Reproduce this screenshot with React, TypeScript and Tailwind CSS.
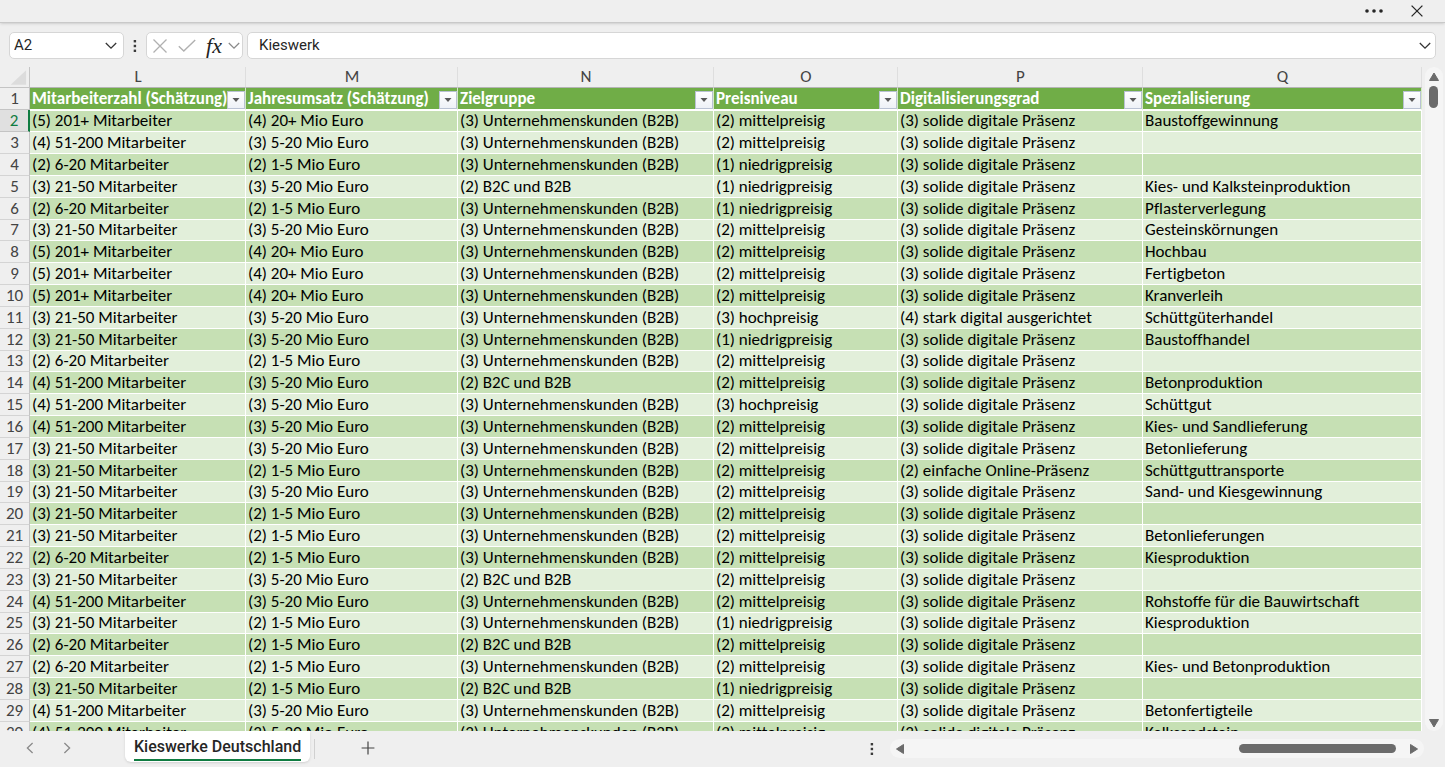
import type { ReactNode } from 'react'

interface Column {
  letter: string
  title: string
  width: string
}

const COLUMNS: Column[] = [
  { letter: 'L', title: 'Mitarbeiterzahl (Schätzung)', width: 'w-[216px]' },
  { letter: 'M', title: 'Jahresumsatz (Schätzung)', width: 'w-[212px]' },
  { letter: 'N', title: 'Zielgruppe', width: 'w-[256px]' },
  { letter: 'O', title: 'Preisniveau', width: 'w-[184px]' },
  { letter: 'P', title: 'Digitalisierungsgrad', width: 'w-[245px]' },
  { letter: 'Q', title: 'Spezialisierung', width: '' },
]

// lookup labels, indexed by their number
const STAFF = ['', '', '6-20 Mitarbeiter', '21-50 Mitarbeiter', '51-200 Mitarbeiter', '201+ Mitarbeiter']
const REVENUE = ['', '', '1-5 Mio Euro', '5-20 Mio Euro', '20+ Mio Euro']
const TARGET = ['', '', 'B2C und B2B', 'Unternehmenskunden (B2B)']
const PRICE = ['', 'niedrigpreisig', 'mittelpreisig', 'hochpreisig']
const DIGITAL = ['', '', 'einfache Online-Präsenz', 'solide digitale Präsenz', 'stark digital ausgerichtet']

type Entry = [number, number, number, number, number, string]

const ENTRIES: Entry[] = [
  [5, 4, 3, 2, 3, 'Baustoffgewinnung'],
  [4, 3, 3, 2, 3, ''],
  [2, 2, 3, 1, 3, ''],
  [3, 3, 2, 1, 3, 'Kies- und Kalksteinproduktion'],
  [2, 2, 3, 1, 3, 'Pflasterverlegung'],
  [3, 3, 3, 2, 3, 'Gesteinskörnungen'],
  [5, 4, 3, 2, 3, 'Hochbau'],
  [5, 4, 3, 2, 3, 'Fertigbeton'],
  [5, 4, 3, 2, 3, 'Kranverleih'],
  [3, 3, 3, 3, 4, 'Schüttgüterhandel'],
  [3, 3, 3, 1, 3, 'Baustoffhandel'],
  [2, 2, 3, 2, 3, ''],
  [4, 3, 2, 2, 3, 'Betonproduktion'],
  [4, 3, 3, 3, 3, 'Schüttgut'],
  [4, 3, 3, 2, 3, 'Kies- und Sandlieferung'],
  [3, 3, 3, 2, 3, 'Betonlieferung'],
  [3, 2, 3, 2, 2, 'Schüttguttransporte'],
  [3, 3, 3, 2, 3, 'Sand- und Kiesgewinnung'],
  [3, 2, 3, 2, 3, ''],
  [3, 2, 3, 2, 3, 'Betonlieferungen'],
  [2, 2, 3, 2, 3, 'Kiesproduktion'],
  [3, 3, 2, 2, 3, ''],
  [4, 3, 3, 2, 3, 'Rohstoffe für die Bauwirtschaft'],
  [3, 2, 3, 1, 3, 'Kiesproduktion'],
  [2, 2, 2, 2, 3, ''],
  [2, 2, 3, 2, 3, 'Kies- und Betonproduktion'],
  [3, 2, 2, 1, 3, ''],
  [4, 3, 3, 2, 3, 'Betonfertigteile'],
  [4, 3, 3, 2, 3, 'Kalksandstein'],
]

const label = (list: string[], n: number) => `(${n}) ${list[n]}`

function Chevron({ d, className }: { d: string; className: string }) {
  return (
    <svg viewBox="0 0 12 12" className={`h-3 w-3 shrink-0 ${className}`} fill="none" stroke="currentColor" strokeWidth="1.3">
      <path d={d} />
    </svg>
  )
}

const DOWN = 'M0.8 3 L6 8.2 L11.2 3'

function VerticalDots() {
  return (
    <svg viewBox="0 0 4 14" className="h-3.5 w-1 shrink-0" fill="#3b3b3b">
      <rect x="0.7" y="1" width="2.4" height="2.4" />
      <rect x="0.7" y="5.8" width="2.4" height="2.4" />
      <rect x="0.7" y="10.6" width="2.4" height="2.4" />
    </svg>
  )
}

function ScrollArrow({ points, name }: { points: string; name: string }) {
  return (
    <button aria-label={name} className="shrink-0">
      <svg viewBox="0 0 12 12" className="h-3 w-3" fill="#6b6b6b" stroke="#6b6b6b" strokeWidth="1" strokeLinejoin="round">
        <polygon points={points} />
      </svg>
    </button>
  )
}

function TitleBar() {
  return (
    <div className="z-10 flex h-[23px] shrink-0 items-center justify-end gap-7 border-b border-[#c9c9c9] pr-[22px] text-[#262626] shadow-sm">
      <button aria-label="Weitere Optionen">
        <svg viewBox="0 0 18 4" className="h-1 w-[18px]" fill="currentColor">
          <circle cx="2" cy="2" r="1.8" />
          <circle cx="9" cy="2" r="1.8" />
          <circle cx="16" cy="2" r="1.8" />
        </svg>
      </button>
      <button aria-label="Schließen">
        <svg viewBox="0 0 12 12" className="h-3 w-3" stroke="currentColor" strokeWidth="1.3">
          <path d="M0.6 0.6 L11.4 11.4 M11.4 0.6 L0.6 11.4" />
        </svg>
      </button>
    </div>
  )
}

function Box({ className, children }: { className: string; children: ReactNode }) {
  return (
    <div className={`flex h-[27px] items-center rounded-[5px] border border-[#d6d6d6] bg-white ${className}`}>
      {children}
    </div>
  )
}

function FormulaBar() {
  return (
    <div className="flex shrink-0 items-center px-[9px] pt-[9px] pb-2 font-['Segoe_UI','Roboto',sans-serif] text-[15px] text-[#262626]">
      <Box className="w-[115px] pr-[6px] pl-1">
        <input aria-label="Namenfeld" defaultValue="A2" className="min-w-0 flex-1 outline-none" />
        <button aria-label="Namenliste öffnen">
          <Chevron d={DOWN} className="text-[#333]" />
        </button>
      </Box>
      <div className="flex w-[22px] justify-center">
        <VerticalDots />
      </div>
      <Box className="w-[97px] pl-[5px]">
        <button aria-label="Abbrechen" className="text-[#b0b0b0]">
          <svg viewBox="0 0 16 16" className="h-4 w-4" stroke="currentColor" strokeWidth="1.3">
            <path d="M1.5 1.5 L14.5 14.5 M14.5 1.5 L1.5 14.5" />
          </svg>
        </button>
        <button aria-label="Eingeben" className="ml-[10px] text-[#b0b0b0]">
          <svg viewBox="0 0 18 14" className="h-3.5 w-[18px]" fill="none" stroke="currentColor" strokeWidth="1.4">
            <path d="M0.8 7.2 L5.8 12 L17.2 1" />
          </svg>
        </button>
        <button
          aria-label="Funktion einfügen"
          className="ml-2 flex h-6 w-5 items-center justify-center font-['Cambria_Math','Liberation_Serif',serif] text-[22px] leading-5 text-[#222] italic"
        >
          fx
        </button>
        <button aria-label="Funktionsliste öffnen" className="ml-1">
          <Chevron d={DOWN} className="text-[#8a8a8a]" />
        </button>
      </Box>
      <Box className="ml-1 flex-1 pr-1 pl-[11px]">
        <input aria-label="Bearbeitungsleiste" defaultValue="Kieswerk" className="min-w-0 flex-1 outline-none" />
        <button aria-label="Bearbeitungsleiste erweitern">
          <Chevron d={DOWN} className="text-[#333]" />
        </button>
      </Box>
    </div>
  )
}

function FilterButton({ title }: { title: string }) {
  return (
    <button
      aria-label={`${title} filtern`}
      className="flex h-[18px] w-[18px] shrink-0 items-center justify-center border border-[#b9c2d3] bg-linear-to-b from-white to-[#eef1f7]"
    >
      <svg viewBox="0 0 8 4" className="h-1 w-2" fill="#595959">
        <polygon points="0.5,0 7.5,0 4,4" />
      </svg>
    </button>
  )
}

function Sheet() {
  return (
    <div className="min-w-0 flex-1 overflow-hidden font-['Calibri','Carlito','Lato',sans-serif] text-[17px] leading-5 [font-variant-ligatures:none]">
      <table className="w-full table-fixed border-separate border-spacing-0 whitespace-nowrap text-black">
        <colgroup>
          <col className="w-[30px]" />
          {COLUMNS.map((c) => (
            <col key={c.letter} className={c.width} />
          ))}
        </colgroup>
        <thead>
          <tr className="h-[21px] text-[#444]">
            <th className="border-r border-b border-[#c4c4c4] p-0">
              <svg viewBox="0 0 30 20" className="block h-5 w-full">
                <polygon points="27,3 27,18 11,18" fill="#dcdcdc" />
              </svg>
            </th>
            {COLUMNS.map((c) => (
              <th key={c.letter} scope="col" className="border-r border-b border-r-[#dedede] border-b-[#b5b5b5] p-0 pl-px leading-5 font-normal">
                {c.letter}
              </th>
            ))}
          </tr>
          <tr className="h-[22px]">
            <th scope="row" className="border-r border-b border-[#c4c4c4] p-0 font-normal text-[#444]">
              1
            </th>
            {COLUMNS.map((c) => (
              <th key={c.letter} className="border-r border-b border-r-[#d5e8c8] border-b-white bg-[#70ad47] p-0 text-left font-bold text-white">
                <div className="flex h-[21px] items-end justify-between pl-[2px]">
                  {c.title}
                  <FilterButton title={c.title} />
                </div>
              </th>
            ))}
          </tr>
        </thead>
        <tbody>
          {ENTRIES.map(([staff, revenue, target, price, digital, special], i) => {
            const cells = [
              label(STAFF, staff),
              label(REVENUE, revenue),
              label(TARGET, target),
              label(PRICE, price),
              label(DIGITAL, digital),
              special,
            ]
            const active = i === 0
            return (
              <tr key={i} className={i % 6 === 5 ? 'h-[21px]' : 'h-[22px]'}>
                <th
                  scope="row"
                  className={
                    active
                      ? 'border-r-2 border-b border-r-[#107c41] border-b-[#c4c4c4] bg-[#e0e0e0] p-0 font-normal text-[#107c41]'
                      : 'border-r border-b border-r-[#c4c4c4] border-b-[#d4d4d4] p-0 font-normal text-[#444]'
                  }
                >
                  {i + 2}
                </th>
                {cells.map((text, c) => (
                  <td
                    key={c}
                    className={`overflow-hidden border-r border-b border-white p-0 pl-[2px] ${active ? 'border-t' : ''} ${i % 2 ? 'bg-[#e2efda]' : 'bg-[#c6e0b4]'}`}
                  >
                    {text}
                  </td>
                ))}
              </tr>
            )
          })}
        </tbody>
      </table>
    </div>
  )
}

function VerticalScrollbar() {
  return (
    <div className="flex w-[23px] shrink-0 justify-center">
      <div className="flex w-[18px] flex-col items-center rounded-full bg-[#f5f5f5] pt-1 pb-[2px]">
        <ScrollArrow name="Nach oben" points="6,2 10.5,9.5 1.5,9.5" />
        <div className="mt-[3px] h-[22px] w-[9px] rounded-full bg-[#6b6b6b]" />
        <div className="flex-1" />
        <ScrollArrow name="Nach unten" points="6,10 10.5,2.5 1.5,2.5" />
      </div>
    </div>
  )
}

function SheetTabs() {
  return (
    <div className="flex h-9 shrink-0 items-start font-['Segoe_UI','Roboto',sans-serif]">
      <div className="flex h-[34px] w-[125px] items-center gap-[25px] pl-6 text-[#8a8a8a]">
        <button aria-label="Vorheriges Blatt">
          <Chevron d="M8.6 1 L3.4 6 L8.6 11" className="" />
        </button>
        <button aria-label="Nächstes Blatt">
          <Chevron d="M3.4 1 L8.6 6 L3.4 11" className="" />
        </button>
      </div>
      <button className="h-[31px] rounded-b-md bg-white px-[9px] text-[16px] font-medium text-[#262626] shadow-sm">
        <span className="block h-7 border-b-2 border-[#107c41] leading-7">Kieswerke Deutschland</span>
      </button>
      <div className="mt-2 ml-1 h-5 w-px bg-[#d0d0d0]" />
      <button aria-label="Neues Blatt" className="mt-[10px] ml-[46px] text-[#444]">
        <svg viewBox="0 0 14 14" className="h-3.5 w-3.5" stroke="currentColor" strokeWidth="1.2">
          <path d="M7 0.6 V13.4 M0.6 7 H13.4" />
        </svg>
      </button>
      <div className="flex-1" />
      <div className="mt-[11px] mr-4">
        <VerticalDots />
      </div>
      <div className="mt-2 mr-[21px] flex h-[19px] w-[534px] items-center rounded-full bg-[#f5f5f5] px-1">
        <ScrollArrow name="Nach links" points="2.5,6 9.5,1.5 9.5,10.5" />
        <div className="flex-1" />
        <div className="mr-3 h-[9px] w-[157px] rounded-full bg-[#6b6b6b]" />
        <ScrollArrow name="Nach rechts" points="9.5,6 2.5,1.5 2.5,10.5" />
      </div>
    </div>
  )
}

export default function App() {
  return (
    <div className="flex h-screen flex-col overflow-hidden bg-[#efefef]">
      <TitleBar />
      <FormulaBar />
      <div className="flex min-h-0 flex-1">
        <Sheet />
        <VerticalScrollbar />
      </div>
      <SheetTabs />
    </div>
  )
}
